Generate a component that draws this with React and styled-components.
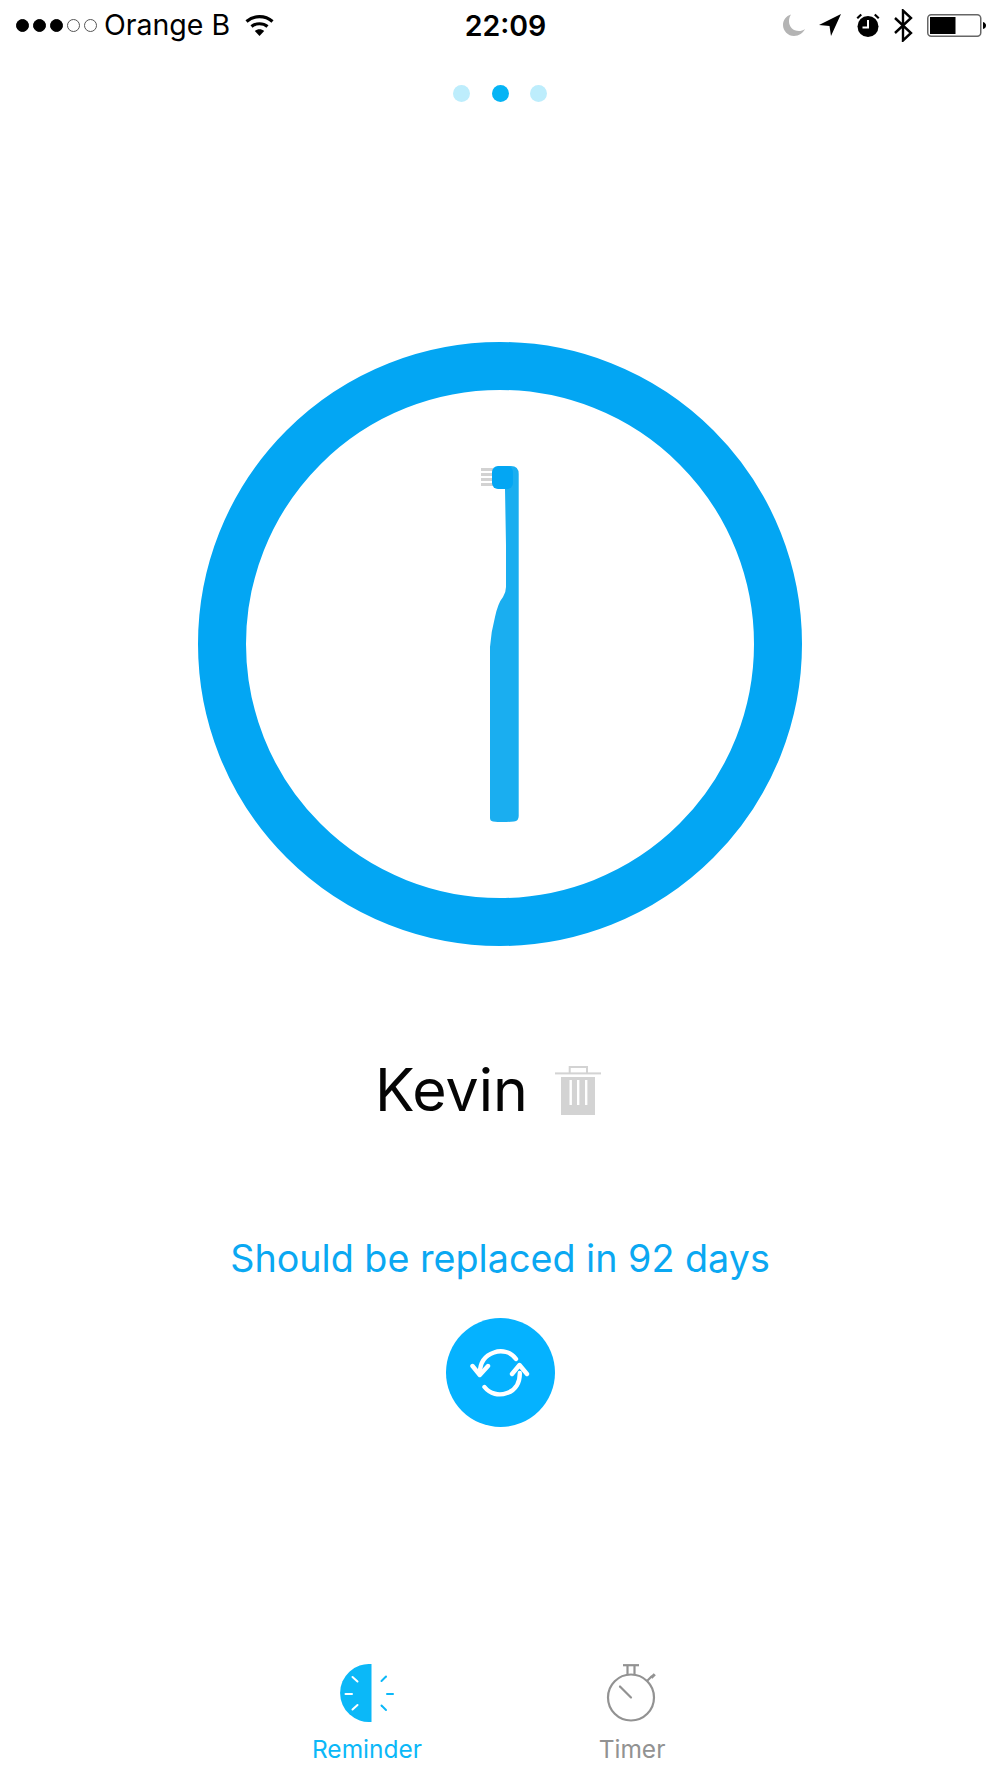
import React from "react";
import styled, {createGlobalStyle} from "styled-components";

const GlobalStyle = createGlobalStyle`
    html, body {
        margin: 0;
        padding: 0;
        background: #ffffff;
    }
    body {
        font-family: Inter, "Liberation Sans", sans-serif;
    }
`;

const Page = styled.div`
    width: 1000px;
    height: 1778px;
    overflow: hidden;
    display: flex;
    flex-direction: column;
    align-items: center;
    background: #ffffff;
`;

const StatusBar = styled.div`
    width: 100%;
    box-sizing: border-box;
    height: 50px;
    padding: 0 14px 0 16px;
    display: grid;
    grid-template-columns: 1fr auto 1fr;
    align-items: center;
    color: #000000;
`;

const StatusLeft = styled.div`
    display: flex;
    align-items: center;
`;

const StatusRight = styled.div`
    display: flex;
    align-items: center;
    justify-content: flex-end;
`;

const SignalDot = styled.span`
    width: 13px;
    height: 13px;
    margin-right: 4px;
    box-sizing: border-box;
    border-radius: 50%;
    border: 1px solid ${p => (p.$on ? "#000000" : "#555555")};
    background: ${p => (p.$on ? "#000000" : "transparent")};
`;

const Carrier = styled.span`
    margin-left: 3px;
    margin-right: 15px;
    font-size: 28.5px;
    line-height: 32px;
`;

const Clock = styled.span`
    padding-left: 9px;
    padding-top: 1px;
    font-size: 28.5px;
    line-height: 32px;
    font-weight: 600;
`;

const StatusIcon = styled.svg`
    display: block;
    flex: none;
    margin-left: ${p => p.$gap || 0}px;
`;

const Pager = styled.div`
    margin-top: 35px;
    display: flex;
    gap: 21.5px;
`;

const PagerDot = styled.span`
    width: 17px;
    height: 17px;
    border-radius: 50%;
    background: ${p => (p.$active ? "#05B4F5" : "#BDEDFC")};
`;

const Ring = styled.div`
    margin-top: 240px;
    width: 604px;
    height: 604px;
    box-sizing: border-box;
    border: 48px solid #03A6F3;
    border-radius: 50%;
    display: flex;
    align-items: center;
    justify-content: center;
`;

const NameRow = styled.div`
    margin-top: 108px;
    padding-right: 24px;
    display: flex;
    align-items: center;
    gap: 27px;
`;

const Name = styled.div`
    font-size: 59px;
    line-height: 72px;
    color: #050505;
`;

const ReplaceNote = styled.div`
    margin-top: 110px;
    font-size: 37.7px;
    line-height: 44px;
    color: #0AA8F2;
`;

const RefreshButton = styled.button`
    margin-top: 38px;
    width: 109px;
    height: 109px;
    padding: 0;
    border: none;
    border-radius: 50%;
    background: #05B2FF;
    display: flex;
    align-items: center;
    justify-content: center;
`;

const TabBar = styled.div`
    margin-top: auto;
    height: 118px;
    padding-right: 1px;
    display: flex;
    justify-content: center;
`;

const Tab = styled.div`
    width: 265px;
    padding-top: 4px;
    display: flex;
    flex-direction: column;
    align-items: center;
    color: ${p => (p.$active ? "#0BB8F8" : "#929292")};
`;

const TabIcon = styled.svg`
    display: block;
    flex: none;
`;

const TabLabel = styled.span`
    margin-top: 12px;
    font-size: 24.5px;
    line-height: 30px;
`;

const Toothbrush = () => (
    <svg width="38" height="358" viewBox="481 466 38 358" style={{display: "block", transform: "translate(0, 1px)"}}>
        <g fill="#D2D2D2">
            <rect x="481" y="468" width="12" height="3"/>
            <rect x="481" y="473" width="12" height="3"/>
            <rect x="481" y="478" width="12" height="3"/>
            <rect x="481" y="483" width="12" height="3"/>
        </g>
        <path
            d="M498 466 H511 Q518.7 466 518.7 474 V816 Q518.7 821 514 821.5 Q502 822.5 493 821.5 Q490 821 490 818 V647 Q491 632 495 617 Q498 603 503 597 Q506 592 506 587 V545 L505 489 H498 Z"
            fill="#1AAEF0"
        />
        <rect x="492" y="466" width="21" height="23" rx="6" fill="#03A6F3"/>
    </svg>
);

const Wifi = () => (
    <StatusIcon width="29" height="23" viewBox="0 0 29 23">
        <path d="M1.5 7.5 C9 1 20 1 27.5 7.5" fill="none" stroke="#000" strokeWidth="3.2"/>
        <path d="M6.5 12.5 C11 8.8 18 8.8 22.5 12.5" fill="none" stroke="#000" strokeWidth="3.2"/>
        <path d="M9.8 17 C12.5 14.6 16.5 14.6 19.2 17 L14.5 22 Z" fill="#000"/>
    </StatusIcon>
);

const Moon = () => (
    <StatusIcon width="22" height="22" viewBox="0 0 22 22">
        <path d="M8 0.5 C3 2 0 6 0 11 C0 17 5 22 11 22 C16 22 20 19 22 15 C20 16.5 18 17 16 17 C10 17 6 13 6 7 C6 4.5 6.8 2.3 8 0.5 Z" fill="#B4B4B4"/>
    </StatusIcon>
);

const Arrow = () => (
    <StatusIcon $gap={14} width="22" height="22" viewBox="0 0 22 22">
        <path d="M22 0 L0 11 L10.5 12 L12 22 Z" fill="#000"/>
    </StatusIcon>
);

const Alarm = () => (
    <StatusIcon $gap={15} width="24" height="24" viewBox="0 0 24 24">
        <circle cx="12" cy="13.5" r="10.5" fill="#000"/>
        <path d="M12 7 V14.5 H6.5" fill="none" stroke="#fff" strokeWidth="2"/>
        <path d="M0.5 4.5 L4.5 0.8 L6 2.2 L2 6 Z M23.5 4.5 L19.5 0.8 L18 2.2 L22 6 Z" fill="#000"/>
    </StatusIcon>
);

const Bluetooth = () => (
    <StatusIcon $gap={14} width="19" height="33" viewBox="0 0 19 33">
        <path d="M1 9 L17 24 L9 31.5 V1.5 L17 9 L1 24" fill="none" stroke="#000" strokeWidth="2.4"/>
    </StatusIcon>
);

const Battery = () => (
    <StatusIcon $gap={14} width="59" height="23" viewBox="0 0 59 23">
        <rect x="0.75" y="0.75" width="53" height="21.5" rx="3.5" fill="none" stroke="#666" strokeWidth="1.5"/>
        <rect x="3" y="3" width="25.5" height="17" fill="#000"/>
        <path d="M56 8 Q59 9 59 11.5 Q59 14 56 15 Z" fill="#000"/>
    </StatusIcon>
);

const Trash = () => (
    <svg width="46" height="49" viewBox="0 0 46 49" style={{display: "block"}}>
        <path d="M14.7 7 V1 H32 V7" fill="none" stroke="#D3D3D3" strokeWidth="2"/>
        <rect x="0" y="6.4" width="46" height="2" fill="#D3D3D3"/>
        <rect x="6" y="11" width="34" height="38" fill="#D3D3D3"/>
        <g fill="#ffffff">
            <rect x="14.5" y="14" width="2.4" height="25"/>
            <rect x="22" y="14" width="2.4" height="25"/>
            <rect x="30" y="14" width="2.4" height="25"/>
        </g>
    </svg>
);

const RefreshIcon = () => (
    <svg width="60" height="48" viewBox="0 0 60 48" style={{display: "block"}} fill="none" stroke="#fff" strokeWidth="4.4" strokeLinecap="round" strokeLinejoin="round">
        <path d="M46 10 C41 3 32 0.5 24 3.5 C15 6.5 10 14 9.8 24"/>
        <path d="M2.5 17 L9.8 26 L18 17"/>
        <path d="M14.5 38 C20 45 29 47 37 44 C46 41 50 33 49.8 24"/>
        <path d="M42 25 L49.5 16 L57 25"/>
    </svg>
);

const ReminderIcon = () => (
    <TabIcon width="55" height="58" viewBox="0 0 55 58">
        <path d="M31.5 0.1 A29 29 0 1 0 31.5 57.9 Z" fill="#0BB8F8"/>
        <g stroke="#ffffff" strokeWidth="2" strokeLinecap="round">
            <path d="M12.5 13 L17.5 17.5"/>
            <path d="M5.5 30 H12"/>
            <path d="M12.5 45.5 L17.5 41"/>
        </g>
        <g stroke="#0BB8F8" strokeWidth="2" strokeLinecap="round">
            <path d="M41.5 17 L46 12.5"/>
            <path d="M47 30 H53"/>
            <path d="M41.5 41.5 L46 46"/>
        </g>
    </TabIcon>
);

const TimerIcon = () => (
    <TabIcon width="52" height="58" viewBox="0 0 52 58">
        <g fill="none" stroke="#929292" strokeWidth="2.2">
            <circle cx="25" cy="33.5" r="23"/>
            <path d="M17 1.2 H33"/>
            <path d="M21.5 1 V10.5"/>
            <path d="M28.5 1 V10.5"/>
            <path d="M41 17 L46 12"/>
            <path d="M14 22.5 L25 33.5" strokeLinecap="round"/>
        </g>
        <rect x="44.5" y="10.5" width="5" height="3" transform="rotate(-45 47 12)" fill="#929292"/>
    </TabIcon>
);

const App = () => {
    const signal = [true, true, true, false, false];
    return (
        <Page>
            <GlobalStyle/>
            <StatusBar>
                <StatusLeft>
                    {signal.map((on, i) => <SignalDot key={i} $on={on}/>)}
                    <Carrier>Orange B</Carrier>
                    <Wifi/>
                </StatusLeft>
                <Clock>22:09</Clock>
                <StatusRight>
                    <Moon/>
                    <Arrow/>
                    <Alarm/>
                    <Bluetooth/>
                    <Battery/>
                </StatusRight>
            </StatusBar>
            <Pager>
                <PagerDot/>
                <PagerDot $active/>
                <PagerDot/>
            </Pager>
            <Ring>
                <Toothbrush/>
            </Ring>
            <NameRow>
                <Name>Kevin</Name>
                <Trash/>
            </NameRow>
            <ReplaceNote>Should be replaced in 92 days</ReplaceNote>
            <RefreshButton>
                <RefreshIcon/>
            </RefreshButton>
            <TabBar>
                <Tab $active>
                    <ReminderIcon/>
                    <TabLabel>Reminder</TabLabel>
                </Tab>
                <Tab>
                    <TimerIcon/>
                    <TabLabel>Timer</TabLabel>
                </Tab>
            </TabBar>
        </Page>
    );
};

export default App;
